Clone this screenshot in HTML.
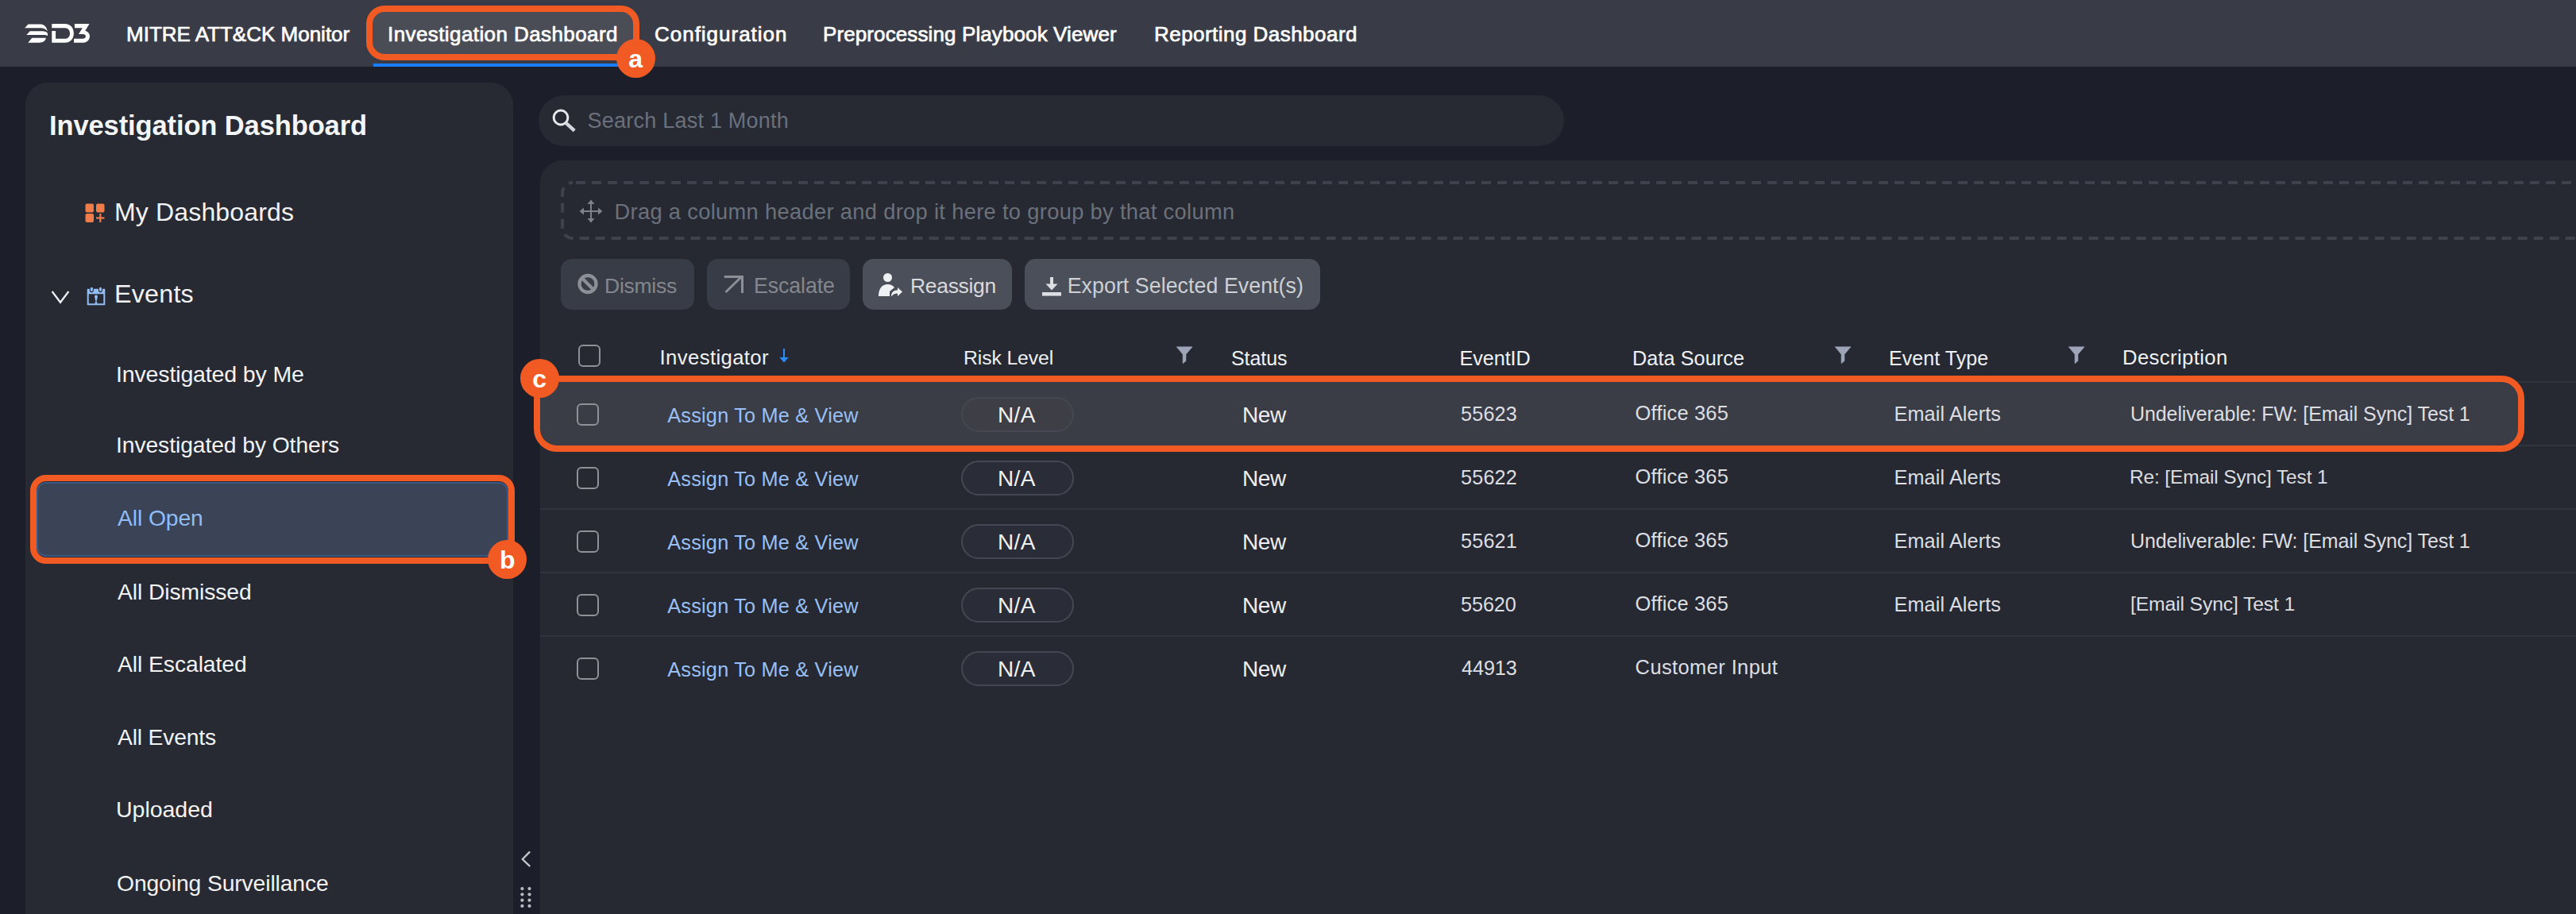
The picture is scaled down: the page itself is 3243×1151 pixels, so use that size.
<!DOCTYPE html>
<html><head><meta charset="utf-8"><style>
html,body{margin:0;padding:0;width:3243px;height:1151px;overflow:hidden;background:#1c1f29;font-family:"Liberation Sans", sans-serif;}
.t{position:absolute;white-space:nowrap;line-height:1;}
.bd{position:absolute;border-radius:50%;background:#f15a22;color:#fff;font-weight:700;font-size:32px;line-height:1;text-align:center;}
.bd span{position:absolute;left:0;right:0;}
</style></head><body>
<div style="position:absolute;left:0px;top:0px;width:3243px;height:84px;background:#393c46"></div>
<div style="position:absolute;left:461px;top:7px;width:344px;height:69px;background:#4b4d56;border-radius:23px"></div>
<div style="position:absolute;left:470px;top:80px;width:330px;height:4px;background:#1a7dfb"></div>
<svg style="position:absolute;left:25px;top:22px" width="100" height="40" viewBox="0 0 2285 914"><g fill="#fff">
<path d="M140,300 L240,195 L600,195 C700,195 780,290 795,400 C760,340 690,300 600,300 Z"/>
<path d="M190,505 L290,395 L640,395 C720,395 790,420 800,470 L800,530 C770,510 720,505 680,505 Z"/>
<path d="M235,725 L350,590 L750,590 C740,680 660,725 560,725 Z"/>
<path d="M920,185 L1300,185 C1450,185 1550,300 1550,455 C1550,610 1450,725 1300,725 L920,725 L920,390 L1030,390 L1030,610 L1300,610 C1390,610 1440,540 1440,455 C1440,370 1390,300 1300,300 L920,300 Z"/>
<path d="M1575,185 L2000,185 L1880,380 C1960,400 2010,460 2010,540 C2010,640 1930,725 1800,725 L1555,725 L1555,610 L1800,610 C1860,610 1895,580 1895,540 C1895,500 1860,480 1820,480 L1690,480 L1800,300 L1575,300 Z"/>
</g></svg>
<div style="position:absolute;left:32px;top:104px;width:614px;height:1096px;background:#272a33;border-radius:28px"></div>
<svg style="position:absolute;left:107px;top:256px" width="25" height="25" viewBox="0 0 25 25"><g fill="#f07c4a">
<rect x="0.5" y="0.6" width="10.5" height="10.9" rx="2"/><rect x="14" y="0.6" width="10.5" height="10.9" rx="2"/>
<rect x="0.5" y="13" width="10.5" height="11" rx="2"/><rect x="18.2" y="13" width="2.2" height="11"/><rect x="14" y="17.4" width="10.5" height="2.2"/></g></svg>
<svg style="position:absolute;left:64px;top:364px" width="24" height="20" viewBox="0 0 24 20"><path d="M1.6,3 L12,16.8 L22.4,3" fill="none" stroke="#eceef0" stroke-width="2.3"/></svg>
<svg style="position:absolute;left:109px;top:361px" width="24" height="24" viewBox="0 0 24 24"><g fill="#92bef6">
<path fill-rule="evenodd" d="M0.7,2.8 H23.3 V23.2 H0.7 Z M2.7,9.2 V21.2 H21.3 V9.2 Z"/>
<rect x="3.9" y="0" width="4.9" height="7.2" rx="2.2" fill="#272a33"/><rect x="15" y="0" width="4.9" height="7.2" rx="2.2" fill="#272a33"/>
<rect x="4.9" y="0.8" width="2.9" height="5.2" rx="1.4"/><rect x="16" y="0.8" width="2.9" height="5.2" rx="1.4"/>
<path d="M10.1,12.2 C10.1,9.8 13.9,9.8 13.9,12.2 L12.7,18.2 H11.3 Z"/><circle cx="12" cy="20.1" r="1.5"/></g></svg>
<div style="position:absolute;left:46px;top:607px;width:594px;height:94px;box-sizing:border-box;background:#3a4456;border:2px solid #3c5884;border-radius:12px"></div>
<div style="position:absolute;left:38px;top:598px;width:610px;height:112px;box-sizing:border-box;border:8px solid #f15a22;border-radius:20px;background:transparent;background-clip:padding-box"></div>
<svg style="position:absolute;left:654px;top:1071px" width="16" height="23" viewBox="0 0 16 23"><path d="M12.5,2.2 L3.7,11 L12.5,19.4" fill="none" stroke="#c3c5ca" stroke-width="2.4" stroke-linecap="round" stroke-linejoin="round"/></svg>
<svg style="position:absolute;left:655px;top:1117px" width="14" height="28" viewBox="0 0 14 28"><g fill="#b9bbc0"><circle cx="2.4" cy="2.1" r="2.1"/><circle cx="2.4" cy="9.3" r="2.1"/><circle cx="2.4" cy="16.7" r="2.1"/><circle cx="2.4" cy="23.9" r="2.1"/><circle cx="11.5" cy="2.1" r="2.1"/><circle cx="11.5" cy="9.3" r="2.1"/><circle cx="11.5" cy="16.7" r="2.1"/><circle cx="11.5" cy="23.9" r="2.1"/></g></svg>
<div style="position:absolute;left:678px;top:120px;width:1291px;height:64px;background:#272a33;border-radius:32px"></div>
<svg style="position:absolute;left:694px;top:137px" width="32" height="31" viewBox="0 0 32 31"><circle cx="12" cy="11" r="8.9" fill="none" stroke="#e6e8ec" stroke-width="3"/><path d="M18.3,17.6 L29.2,27.6" stroke="#d3d6db" stroke-width="4.4"/></svg>
<div style="position:absolute;left:680px;top:202px;width:2620px;height:998px;background:#262932;border-radius:28px"></div>
<svg style="position:absolute;left:706px;top:228px" width="2700" height="74"><rect x="2" y="2" width="2696" height="70" rx="13" fill="none" stroke="#3e424c" stroke-width="4" stroke-dasharray="12 8" stroke-dashoffset="-4"/></svg>
<svg style="position:absolute;left:729px;top:251px" width="30" height="30" viewBox="0 0 30 30"><g fill="#7d818a">
<rect x="14" y="4" width="2" height="22"/><rect x="4" y="14" width="22" height="2"/>
<path d="M15,0.5 L19.5,6 L10.5,6 Z"/><path d="M15,29.5 L19.5,24 L10.5,24 Z"/><path d="M0.5,15 L6,10.5 L6,19.5 Z"/><path d="M29.5,15 L24,10.5 L24,19.5 Z"/></g></svg>
<div style="position:absolute;left:706px;top:326px;width:168px;height:64px;background:#383c46;border-radius:14px"></div>
<div style="position:absolute;left:890px;top:326px;width:180px;height:64px;background:#383c46;border-radius:14px"></div>
<div style="position:absolute;left:1086px;top:326px;width:188px;height:64px;background:#4a4f5a;border-radius:14px"></div>
<div style="position:absolute;left:1290px;top:326px;width:372px;height:64px;background:#4a4f5a;border-radius:14px"></div>
<svg style="position:absolute;left:726px;top:344px" width="28" height="28" viewBox="0 0 28 28"><circle cx="14" cy="13.5" r="10.5" fill="none" stroke="#8c8f95" stroke-width="4.3"/><path d="M6.8,6.3 L21.2,20.7" stroke="#8c8f95" stroke-width="4.3"/></svg>
<svg style="position:absolute;left:911px;top:346px" width="26" height="24" viewBox="0 0 26 24"><g fill="none" stroke="#8c8f95" stroke-width="3"><path d="M2.5,22 L22,3"/><path d="M0.8,2.5 H23.5 V23"/></g></svg>
<svg style="position:absolute;left:1105px;top:343px" width="32" height="32" viewBox="0 0 32 32"><g fill="#f0f1f3">
<circle cx="12.5" cy="6.5" r="5.5"/><path d="M1,30 C1,20 6,15 12.5,15 C16,15 19,16.5 21,19 L15,24 V30 Z"/>
<path d="M17,30.5 C17,25 20,22.5 25,22.5 V19 L31,24.5 L25,30 V26.5 C21.5,26.5 19,28 17,30.5 Z"/></g></svg>
<svg style="position:absolute;left:1311px;top:348px" width="26" height="25" viewBox="0 0 26 25"><g fill="#dcdee2">
<rect x="11" y="1" width="4" height="10"/><path d="M5.5,9.5 H20.5 L13,17.5 Z"/><rect x="1" y="20" width="24" height="4.6"/></g></svg>
<div style="position:absolute;left:728px;top:434px;width:28px;height:28px;box-sizing:border-box;border:2px solid #8e9196;border-radius:6px"></div>
<svg style="position:absolute;left:980px;top:438px" width="14" height="20" viewBox="0 0 14 20"><g fill="#2a8bff"><rect x="6" y="1" width="2" height="13"/><path d="M1.3,12 H12.8 L7,18.6 Z"/></g></svg>
<svg style="position:absolute;left:1479.5px;top:436px" width="22" height="23" viewBox="0 0 22 23"><path d="M1.2,0.8 H21.1 L13,10.2 V18.6 L9.1,21.8 V10.2 Z" fill="#9ea5b8" stroke="#9ea5b8" stroke-width="0.6" stroke-linejoin="round"/></svg>
<svg style="position:absolute;left:2309.1px;top:436px" width="22" height="23" viewBox="0 0 22 23"><path d="M1.2,0.8 H21.1 L13,10.2 V18.6 L9.1,21.8 V10.2 Z" fill="#9ea5b8" stroke="#9ea5b8" stroke-width="0.6" stroke-linejoin="round"/></svg>
<svg style="position:absolute;left:2602.5px;top:436px" width="22" height="23" viewBox="0 0 22 23"><path d="M1.2,0.8 H21.1 L13,10.2 V18.6 L9.1,21.8 V10.2 Z" fill="#9ea5b8" stroke="#9ea5b8" stroke-width="0.6" stroke-linejoin="round"/></svg>
<div style="position:absolute;left:680px;top:480px;width:2563px;height:2px;background:#30343e"></div>
<div style="position:absolute;left:680px;top:560px;width:2563px;height:2px;background:#30343e"></div>
<div style="position:absolute;left:680px;top:640px;width:2563px;height:2px;background:#30343e"></div>
<div style="position:absolute;left:680px;top:720px;width:2563px;height:2px;background:#30343e"></div>
<div style="position:absolute;left:680px;top:800px;width:2563px;height:2px;background:#30343e"></div>
<div style="position:absolute;left:672px;top:473px;width:2506px;height:96px;box-sizing:border-box;border:8px solid #f15a22;border-radius:29px;background:#3a3c46;background-clip:padding-box"></div>
<div style="position:absolute;left:726px;top:508px;width:28px;height:28px;box-sizing:border-box;border:2px solid #8e9196;border-radius:6px"></div>
<div style="position:absolute;left:1210px;top:500px;width:142px;height:44px;box-sizing:border-box;border:2px solid #454852;background:#3e3e47;border-radius:22px"></div>
<div style="position:absolute;left:726px;top:588px;width:28px;height:28px;box-sizing:border-box;border:2px solid #8e9196;border-radius:6px"></div>
<div style="position:absolute;left:1210px;top:580px;width:142px;height:44px;box-sizing:border-box;border:2px solid #454852;background:#2a2d37;border-radius:22px"></div>
<div style="position:absolute;left:726px;top:668px;width:28px;height:28px;box-sizing:border-box;border:2px solid #8e9196;border-radius:6px"></div>
<div style="position:absolute;left:1210px;top:660px;width:142px;height:44px;box-sizing:border-box;border:2px solid #454852;background:#2a2d37;border-radius:22px"></div>
<div style="position:absolute;left:726px;top:748px;width:28px;height:28px;box-sizing:border-box;border:2px solid #8e9196;border-radius:6px"></div>
<div style="position:absolute;left:1210px;top:740px;width:142px;height:44px;box-sizing:border-box;border:2px solid #454852;background:#2a2d37;border-radius:22px"></div>
<div style="position:absolute;left:726px;top:828px;width:28px;height:28px;box-sizing:border-box;border:2px solid #8e9196;border-radius:6px"></div>
<div style="position:absolute;left:1210px;top:820px;width:142px;height:44px;box-sizing:border-box;border:2px solid #454852;background:#2a2d37;border-radius:22px"></div>
<div class="t" style="left:159.00px;top:30.20px;font-size:26.0px;font-weight:400;color:#ffffff;letter-spacing:-0.000px;-webkit-text-stroke:0.7px #ffffff;">MITRE ATT&CK Monitor</div>
<div class="t" style="left:488.00px;top:30.20px;font-size:26.0px;font-weight:400;color:#ffffff;letter-spacing:0.412px;-webkit-text-stroke:0.7px #ffffff;">Investigation Dashboard</div>
<div class="t" style="left:824.00px;top:30.20px;font-size:26.0px;font-weight:400;color:#ffffff;letter-spacing:0.984px;-webkit-text-stroke:0.7px #ffffff;">Configuration</div>
<div class="t" style="left:1036.00px;top:30.20px;font-size:26.0px;font-weight:400;color:#ffffff;letter-spacing:0.109px;-webkit-text-stroke:0.7px #ffffff;">Preprocessing Playbook Viewer</div>
<div class="t" style="left:1453.00px;top:30.20px;font-size:26.0px;font-weight:400;color:#ffffff;letter-spacing:0.462px;-webkit-text-stroke:0.7px #ffffff;">Reporting Dashboard</div>
<div class="t" style="left:62.00px;top:140.68px;font-size:34.5px;font-weight:700;color:#f4f5f7;letter-spacing:-0.113px;">Investigation Dashboard</div>
<div class="t" style="left:144.00px;top:250.50px;font-size:32.0px;font-weight:400;color:#f2f3f5;letter-spacing:0.159px;">My Dashboards</div>
<div class="t" style="left:144.00px;top:354.29px;font-size:32.25px;font-weight:400;color:#f2f3f5;letter-spacing:0.227px;">Events</div>
<div class="t" style="left:146.00px;top:456.77px;font-size:28.5px;font-weight:400;color:#f2f3f5;letter-spacing:-0.139px;">Investigated by Me</div>
<div class="t" style="left:146.00px;top:545.99px;font-size:28.25px;font-weight:400;color:#f2f3f5;letter-spacing:-0.073px;">Investigated by Others</div>
<div class="t" style="left:148.00px;top:637.99px;font-size:28.25px;font-weight:400;color:#92bcf6;letter-spacing:-0.091px;">All Open</div>
<div class="t" style="left:148.00px;top:730.99px;font-size:28.25px;font-weight:400;color:#f2f3f5;letter-spacing:-0.068px;">All Dismissed</div>
<div class="t" style="left:148.00px;top:821.99px;font-size:28.25px;font-weight:400;color:#f2f3f5;letter-spacing:-0.050px;">All Escalated</div>
<div class="t" style="left:148.00px;top:913.99px;font-size:28.25px;font-weight:400;color:#f2f3f5;letter-spacing:-0.165px;">All Events</div>
<div class="t" style="left:146.00px;top:1005.37px;font-size:28.5px;font-weight:400;color:#f2f3f5;letter-spacing:-0.024px;">Uploaded</div>
<div class="t" style="left:147.00px;top:1097.99px;font-size:28.25px;font-weight:400;color:#f2f3f5;letter-spacing:-0.096px;">Ongoing Surveillance</div>
<div class="t" style="left:739.60px;top:139.25px;font-size:27.0px;font-weight:400;color:#6b717c;letter-spacing:0.226px;">Search Last 1 Month</div>
<div class="t" style="left:773.50px;top:252.84px;font-size:27.25px;font-weight:400;color:#6b717c;letter-spacing:0.337px;">Drag a column header and drop it here to group by that column</div>
<div class="t" style="left:761.00px;top:347.48px;font-size:26.5px;font-weight:400;color:#84878d;letter-spacing:-0.248px;">Dismiss</div>
<div class="t" style="left:949.00px;top:347.26px;font-size:26.75px;font-weight:400;color:#84878d;letter-spacing:-0.103px;">Escalate</div>
<div class="t" style="left:1146.00px;top:347.48px;font-size:26.5px;font-weight:400;color:#d9dadd;letter-spacing:-0.320px;">Reassign</div>
<div class="t" style="left:1343.70px;top:347.26px;font-size:26.75px;font-weight:400;color:#cdd0d4;letter-spacing:0.058px;">Export Selected Event(s)</div>
<div class="t" style="left:830.60px;top:438.11px;font-size:25.75px;font-weight:400;color:#eff1f4;letter-spacing:0.351px;">Investigator</div>
<div class="t" style="left:1213.00px;top:438.96px;font-size:24.75px;font-weight:400;color:#eff1f4;letter-spacing:-0.108px;">Risk Level</div>
<div class="t" style="left:1550.00px;top:438.75px;font-size:25.0px;font-weight:400;color:#eff1f4;letter-spacing:-0.075px;">Status</div>
<div class="t" style="left:1837.50px;top:438.54px;font-size:25.25px;font-weight:400;color:#eff1f4;letter-spacing:-0.097px;">EventID</div>
<div class="t" style="left:2055.00px;top:438.54px;font-size:25.25px;font-weight:400;color:#eff1f4;letter-spacing:0.069px;">Data Source</div>
<div class="t" style="left:2378.00px;top:438.75px;font-size:25.0px;font-weight:400;color:#eff1f4;letter-spacing:0.048px;">Event Type</div>
<div class="t" style="left:2672.00px;top:438.11px;font-size:25.75px;font-weight:400;color:#eff1f4;letter-spacing:0.352px;">Description</div>
<div class="t" style="left:840.30px;top:510.54px;font-size:25.25px;font-weight:400;color:#98c0f6;letter-spacing:0.218px;">Assign To Me &amp; View</div>
<div class="t" style="left:1256.00px;top:509.00px;font-size:28.0px;font-weight:400;color:#f0f1f3;letter-spacing:0.350px;">N/A</div>
<div class="t" style="left:1564.00px;top:509.20px;font-size:28.0px;font-weight:400;color:#eceef0;letter-spacing:-0.396px;">New</div>
<div class="t" style="left:1839.00px;top:508.54px;font-size:25.25px;font-weight:400;color:#dcdee1;letter-spacing:0.157px;">55623</div>
<div class="t" style="left:2058.60px;top:508.32px;font-size:25.5px;font-weight:400;color:#dcdee1;letter-spacing:0.168px;">Office 365</div>
<div class="t" style="left:2384.50px;top:508.54px;font-size:25.25px;font-weight:400;color:#dcdee1;letter-spacing:0.103px;">Email Alerts</div>
<div class="t" style="left:2682.00px;top:508.75px;font-size:25.0px;font-weight:400;color:#dcdee1;letter-spacing:-0.093px;">Undeliverable: FW: [Email Sync] Test 1</div>
<div class="t" style="left:840.30px;top:590.54px;font-size:25.25px;font-weight:400;color:#98c0f6;letter-spacing:0.218px;">Assign To Me &amp; View</div>
<div class="t" style="left:1256.00px;top:589.00px;font-size:28.0px;font-weight:400;color:#f0f1f3;letter-spacing:0.350px;">N/A</div>
<div class="t" style="left:1564.00px;top:589.20px;font-size:28.0px;font-weight:400;color:#eceef0;letter-spacing:-0.396px;">New</div>
<div class="t" style="left:1839.00px;top:588.54px;font-size:25.25px;font-weight:400;color:#dcdee1;letter-spacing:0.157px;">55622</div>
<div class="t" style="left:2058.60px;top:588.33px;font-size:25.5px;font-weight:400;color:#dcdee1;letter-spacing:0.168px;">Office 365</div>
<div class="t" style="left:2384.50px;top:588.54px;font-size:25.25px;font-weight:400;color:#dcdee1;letter-spacing:0.103px;">Email Alerts</div>
<div class="t" style="left:2681.00px;top:589.17px;font-size:24.5px;font-weight:400;color:#dcdee1;letter-spacing:-0.147px;">Re: [Email Sync] Test 1</div>
<div class="t" style="left:840.30px;top:670.54px;font-size:25.25px;font-weight:400;color:#98c0f6;letter-spacing:0.218px;">Assign To Me &amp; View</div>
<div class="t" style="left:1256.00px;top:669.00px;font-size:28.0px;font-weight:400;color:#f0f1f3;letter-spacing:0.350px;">N/A</div>
<div class="t" style="left:1564.00px;top:669.20px;font-size:28.0px;font-weight:400;color:#eceef0;letter-spacing:-0.396px;">New</div>
<div class="t" style="left:1839.00px;top:668.54px;font-size:25.25px;font-weight:400;color:#dcdee1;letter-spacing:0.157px;">55621</div>
<div class="t" style="left:2058.60px;top:668.33px;font-size:25.5px;font-weight:400;color:#dcdee1;letter-spacing:0.168px;">Office 365</div>
<div class="t" style="left:2384.50px;top:668.54px;font-size:25.25px;font-weight:400;color:#dcdee1;letter-spacing:0.103px;">Email Alerts</div>
<div class="t" style="left:2682.00px;top:668.75px;font-size:25.0px;font-weight:400;color:#dcdee1;letter-spacing:-0.093px;">Undeliverable: FW: [Email Sync] Test 1</div>
<div class="t" style="left:840.30px;top:750.54px;font-size:25.25px;font-weight:400;color:#98c0f6;letter-spacing:0.218px;">Assign To Me &amp; View</div>
<div class="t" style="left:1256.00px;top:749.00px;font-size:28.0px;font-weight:400;color:#f0f1f3;letter-spacing:0.350px;">N/A</div>
<div class="t" style="left:1564.00px;top:749.20px;font-size:28.0px;font-weight:400;color:#eceef0;letter-spacing:-0.396px;">New</div>
<div class="t" style="left:1839.00px;top:748.54px;font-size:25.25px;font-weight:400;color:#dcdee1;letter-spacing:-0.093px;">55620</div>
<div class="t" style="left:2058.60px;top:748.33px;font-size:25.5px;font-weight:400;color:#dcdee1;letter-spacing:0.168px;">Office 365</div>
<div class="t" style="left:2384.50px;top:748.54px;font-size:25.25px;font-weight:400;color:#dcdee1;letter-spacing:0.103px;">Email Alerts</div>
<div class="t" style="left:2682.00px;top:748.96px;font-size:24.75px;font-weight:400;color:#dcdee1;letter-spacing:-0.149px;">[Email Sync] Test 1</div>
<div class="t" style="left:840.30px;top:830.54px;font-size:25.25px;font-weight:400;color:#98c0f6;letter-spacing:0.218px;">Assign To Me &amp; View</div>
<div class="t" style="left:1256.00px;top:829.00px;font-size:28.0px;font-weight:400;color:#f0f1f3;letter-spacing:0.350px;">N/A</div>
<div class="t" style="left:1564.00px;top:829.20px;font-size:28.0px;font-weight:400;color:#eceef0;letter-spacing:-0.396px;">New</div>
<div class="t" style="left:1840.00px;top:828.54px;font-size:25.25px;font-weight:400;color:#dcdee1;letter-spacing:-0.093px;">44913</div>
<div class="t" style="left:2058.60px;top:828.33px;font-size:25.5px;font-weight:400;color:#dcdee1;letter-spacing:0.381px;">Customer Input</div>
<div style="position:absolute;left:461px;top:7px;width:344px;height:69px;box-sizing:border-box;border:8px solid #f15a22;border-radius:23px;background:transparent;background-clip:padding-box"></div>
<div class="bd" style="left:775.7px;top:49.0px;width:49px;height:49px"><span style="top:9.3px">a</span></div>
<div class="bd" style="left:614.2px;top:679.9px;width:49px;height:49px"><span style="top:9.3px">b</span></div>
<div class="bd" style="left:654.7px;top:452.1px;width:49px;height:49px"><span style="top:9.3px">c</span></div>
</body></html>
